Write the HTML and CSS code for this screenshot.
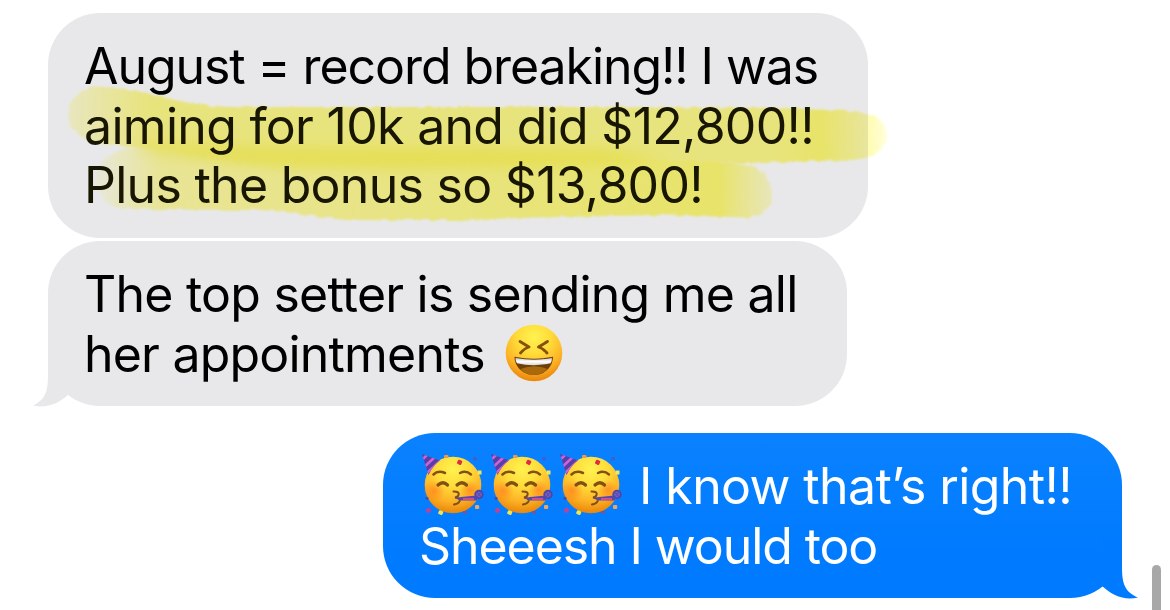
FILE: index.html
```html
<!DOCTYPE html>
<html lang="en">

<head>
    <meta charset="utf-8" />
    <title>Messages</title>
    <link rel="stylesheet" href="styles.css">
</head>

<body>
    <!-- emoji shapes, used by the messages below -->
    <svg class="defs" width="0" height="0">
        <defs>
            <radialGradient id="face" cx="50%" cy="22%" r="78%">
                <stop offset="0" stop-color="#fff250" />
                <stop offset="0.38" stop-color="#ffdc3a" />
                <stop offset="0.72" stop-color="#fdb426" />
                <stop offset="1" stop-color="#e9850c" />
            </radialGradient>
            <radialGradient id="blush">
                <stop offset="0" stop-color="#ff7a1c" stop-opacity="0.65" />
                <stop offset="1" stop-color="#ff7a1c" stop-opacity="0" />
            </radialGradient>
            <linearGradient id="teeth" x1="0" y1="0" x2="0" y2="1">
                <stop offset="0" stop-color="#c9c9c9" />
                <stop offset="0.5" stop-color="#ffffff" />
                <stop offset="1" stop-color="#d8d8d8" />
            </linearGradient>
            <clipPath id="hat">
                <path d="M3 2L21 8.500Q14 13 9.500 23Z" />
            </clipPath>
            <symbol id="party" viewBox="0 0 69 66">
                <circle cx="34" cy="33" r="28.300" fill="url(#face)" />
                <circle cx="15" cy="39" r="11" fill="url(#blush)" />
                <circle cx="51" cy="38" r="10" fill="url(#blush)" />
                <g clip-path="url(#hat)">
                    <path d="M0 0H25V25H0Z" fill="#573fa5" />
                    <path d="M1 10L9 2M3 17L17 4M7 22L23 7" stroke="#cf62d8" stroke-width="2.500" />
                </g>
                <g fill="none" stroke="#805014" stroke-linecap="round">
                    <path d="M14.500 22.500Q19 18 26 21M41 21Q47 18 52 22.500" stroke-width="2.500" />
                    <path d="M19 33Q24 28.500 28.500 33M38 33Q43 28.500 47.500 33" stroke-width="3.200" />
                    <path d="M34.500 39.500Q41 39.500 39.500 43Q39 45 36 45.500Q42 46.500 40.500 49.500Q39 52 35 52.500" stroke-width="2" />
                </g>
                <path d="M36 46L42 45L58 43.500V48.500L42 48.500Z" fill="#5947ad" />
                <path d="M44 47H55" stroke="#e9518d" stroke-width="1.600" />
                <circle cx="60" cy="42.500" r="3.800" fill="#8055bd" stroke="#4847a5" stroke-width="1.800" />
                <path d="M58 40L62 45M62 40L58 45" stroke="#4554b9" stroke-width="1" />
                <rect x="38.500" y="8" width="4.500" height="4.500" rx="1" transform="rotate(25 40.500 10)" fill="#db2e42" />
                <rect x="25" y="3" width="4.500" height="3" rx="1" fill="#ed9a51" />
                <rect x="54" y="5" width="4" height="3.500" rx="1" fill="#3c62cf" />
                <rect x="58.500" y="18.500" width="4" height="4" fill="#efe65c" />
                <rect x="56" y="53" width="4.200" height="4" rx="1" fill="#eea65d" />
                <rect x="7.500" y="56" width="4.500" height="4.500" rx="1" transform="rotate(40 9.500 58)" fill="#b84498" />
                <rect x="19.500" y="58.500" width="4.500" height="4" rx="1" transform="rotate(25 21.500 60.500)" fill="#f2e64c" />
                <rect x="6.500" y="45" width="3" height="3" rx="1" fill="#4151ae" />
                <rect x="44" y="59" width="4" height="2.500" rx="1" fill="#8b4e83" />
            </symbol>
            <symbol id="laugh" viewBox="0 0 58 58">
                <circle cx="29" cy="29" r="28.300" fill="url(#face)" />
                <g fill="none" stroke="#875009" stroke-width="2.800" stroke-linecap="round" stroke-linejoin="round">
                    <path d="M15 17.500L24 23Q20 24 15.500 29M42.500 17.500L33.500 23Q37.500 24 42 29" />
                </g>
                <path d="M9.500 32.800Q29 36.500 48 32.800C48 43 39.500 51 29 51S9.500 43 9.500 32.800Z" fill="#6f3f08" />
                <path d="M15.500 45Q29 39.500 42.500 45Q37 51 29 51T15.500 45Z" fill="#a86a0d" />
                <path d="M10.500 34Q29 37.500 47 34Q47 37 45.500 39.300Q29 43 12 39.300Q10.500 37 10.500 34Z" fill="url(#teeth)" />
            </symbol>
        </defs>
    </svg>

    <div class="chat">
        <div class="bubble received first">
            <div class="line l1">August = record breaking!! I was</div>
            <div class="line l2 marked">aiming for 10k and did $12,800!!</div>
            <div class="line l3 marked">Plus the bonus so $13,800!</div>
            <!-- highlighter strokes -->
            <svg class="marker" viewBox="48 73 860 160" width="860" height="160">
                <defs>
                    <filter id="rough" x="-5%" y="-10%" width="110%" height="120%">
                        <feTurbulence type="fractalNoise" baseFrequency="0.12" numOctaves="2" seed="4" />
                        <feDisplacementMap in="SourceGraphic" scale="5" xChannelSelector="R" yChannelSelector="G" />
                        <feGaussianBlur stdDeviation="1.2" />
                    </filter>
                    <filter id="soft" x="-5%" y="-60%" width="110%" height="220%">
                        <feGaussianBlur stdDeviation="7" />
                    </filter>
                    <linearGradient id="ink1" gradientUnits="userSpaceOnUse" x1="66" y1="0" x2="888" y2="0">
                        <stop offset="0" stop-color="#fffb90" stop-opacity="0.4" />
                        <stop offset="0.1" stop-color="#fffb88" />
                        <stop offset="0.86" stop-color="#fffb88" />
                        <stop offset="0.92" stop-color="#fffa72" />
                        <stop offset="0.97" stop-color="#fffb88" stop-opacity="0.75" />
                        <stop offset="1" stop-color="#fffb90" stop-opacity="0.3" />
                    </linearGradient>
                    <linearGradient id="ink2" gradientUnits="userSpaceOnUse" x1="94" y1="0" x2="774" y2="0">
                        <stop offset="0" stop-color="#fffb92" stop-opacity="0.15" />
                        <stop offset="0.1" stop-color="#fffb92" stop-opacity="0.85" />
                        <stop offset="0.5" stop-color="#fffb8c" />
                        <stop offset="0.92" stop-color="#fffa72" />
                        <stop offset="1" stop-color="#fffb90" stop-opacity="0.45" />
                    </linearGradient>
                </defs>
                <path filter="url(#rough)" fill="url(#ink1)" d="M68 113C68 98 82 86 104 86C142 88 180 107 235 107L610 107L780 108L850 111C878 113 886 119 886 135C886 149 876 158 852 160L748 163L610 166L420 170L290 169C220 164 165 148 112 145C84 144 68 132 68 113Z" />
                <path filter="url(#rough)" fill="url(#ink2)" d="M96 175C98 158 115 148 142 146C190 145 240 154 310 153L580 156L735 163C760 165 772 176 772 192C772 211 760 220 735 217L660 215L560 217L450 220L350 220C310 217 285 209 240 210L130 209C108 209 96 196 96 175Z" />
                <path class="overlap" filter="url(#soft)" d="M140 144Q210 146 290 149H600L670 158L600 164L400 168L280 166Q200 160 140 150Z" />
            </svg>
        </div>

        <div class="bubble received second">
            <div class="line l4">The top setter is sending me all</div>
            <div class="line"><span class="l5">her appointments</span><svg class="laugh" width="58" height="58"><use href="#laugh" /></svg></div>
            <svg class="tail" viewBox="0 0 48 60" width="48" height="60">
                <path d="M15 0V28C15 45 12 53 0 58.500C14 62 26 56 35 48V0Z" />
            </svg>
        </div>

        <div class="bubble sent">
            <div class="line">
                <svg class="party" width="69" height="66"><use href="#party" /></svg>
                <svg class="party" width="69" height="66"><use href="#party" /></svg>
                <svg class="party" width="69" height="66"><use href="#party" /></svg>
                <span class="l6">I know that’s right!!</span>
            </div>
            <div class="line l7">Sheeesh I would too</div>
            <svg class="tail" viewBox="0 0 48 60" width="48" height="60">
                <path d="M32 0V28C32 45 35 53 48 58.500C34 62 22 56 12 47V0Z" />
            </svg>
        </div>
    </div>
    <div class="scrollbar"></div>
</body>

</html>
```

FILE: styles.css
```css
* {
    margin: 0;
    padding: 0;
    box-sizing: border-box;
}

body {
    height: 610px;
    background: #fff;
    overflow: hidden;
    font-family: Inter, "Liberation Sans", sans-serif;
    font-size: 50px;
    color: #000;
}

.defs {
    position: absolute;
}

.chat {
    display: flex;
    flex-direction: column;
    align-items: flex-start;
    padding: 13px 48px 0;
}

.bubble {
    position: relative;
    padding: 22.5px 36px;
    border-radius: 52px;
}

.received {
    background: #e8e8ea;
}

.first {
    width: 820px;
    height: 225px;
    margin-bottom: 3px;
}

.second {
    width: 799px;
    height: 164.500px;
    margin-bottom: 27.500px;
}

.sent {
    align-self: flex-end;
    width: 739px;
    height: 165px;
    background: linear-gradient(#0a82ff, #007aff 75%);
    color: #fff;
}

.line {
    display: flex;
    align-items: center;
    height: 59.700px;
    padding-top: 1.500px;
    line-height: 60px;
    white-space: nowrap;
}

.line svg {
    flex: none;
    margin-top: -2px;
}

/* tighten each line to its own width */
.l1 {
    letter-spacing: -1.070px;
}

.l2 {
    letter-spacing: -0.700px;
}

.l3 {
    letter-spacing: -0.720px;
}

.l4 {
    letter-spacing: -0.770px;
}

.l5 {
    letter-spacing: -0.800px;
}

.l6 {
    margin-left: 13px;
    letter-spacing: -0.600px;
}

.l7 {
    letter-spacing: -1.080px;
}

.marked {
    color: #181600;
}

/* the marker runs over the text and past the bubble edge */
.marker {
    position: absolute;
    left: 0;
    top: 60px;
    mix-blend-mode: multiply;
}

.overlap {
    fill: #fbf23c;
    opacity: 0.65;
}

.laugh {
    margin-left: 20px;
}

.party {
    margin-right: 0;
}

.tail {
    position: absolute;
    bottom: -1px;
}

.received .tail {
    left: -15px;
    fill: #e8e8ea;
}

.sent .tail {
    right: -16px;
    fill: #007aff;
}

.scrollbar {
    position: absolute;
    right: 9px;
    bottom: 0;
    width: 9px;
    height: 45px;
    border-radius: 5px 5px 0 0;
    background: #a8a8a8;
}
```
